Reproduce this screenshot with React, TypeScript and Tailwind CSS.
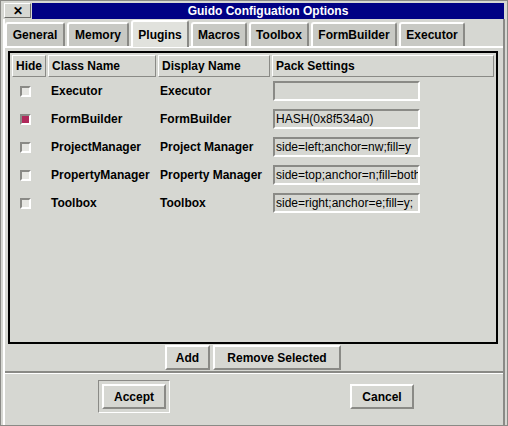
import React from 'react';

const font = { fontFamily: '"Liberation Sans", Arial, sans-serif' };

const tabs = ['General', 'Memory', 'Plugins', 'Macros', 'Toolbox', 'FormBuilder', 'Executor'];
const tabWidths: Record<string, string> = {
  General: 'w-[60px]',
  Memory: 'w-[62px]',
  Plugins: 'w-[58px]',
  Macros: 'w-[56px]',
  Toolbox: 'w-[60px]',
  FormBuilder: 'w-[86px]',
  Executor: 'w-[66px]',
};

const rows = [
  { cls: 'Executor', disp: 'Executor', pack: '', hide: false },
  { cls: 'FormBuilder', disp: 'FormBuilder', pack: 'HASH(0x8f534a0)', hide: true },
  { cls: 'ProjectManager', disp: 'Project Manager', pack: 'side=left;anchor=nw;fill=y', hide: false },
  { cls: 'PropertyManager', disp: 'Property Manager', pack: 'side=top;anchor=n;fill=both', hide: false },
  { cls: 'Toolbox', disp: 'Toolbox', pack: 'side=right;anchor=e;fill=y;', hide: false },
];

function HeaderCell({ label, className }: { label: string; className: string }) {
  return (
    <div
      className={`h-[22px] flex items-center pl-[3px] border border-t-white border-l-white border-b-[#8a8a86] border-r-[#8a8a86] font-bold text-[12px] ${className}`}
    >
      {label}
    </div>
  );
}

function Button({ label, className }: { label: string; className: string }) {
  return (
    <div
      className={`h-[25px] flex items-center justify-center font-bold text-[12px] border-2 border-t-white border-l-white border-b-[#8a8a86] border-r-[#8a8a86] ${className}`}
    >
      {label}
    </div>
  );
}

export default function App() {
  return (
    <div
      style={font}
      className="w-[508px] h-[426px] bg-[#d6d7d2] text-black flex flex-col overflow-hidden border border-[#8a8a86]"
    >
      {/* Title bar */}
      <div className="h-[18px] flex items-center bg-[#d6d7d2] px-[3px] pt-[1px]">
        <div className="w-[27px] h-[15px] flex items-center justify-center border border-t-white border-l-white border-b-[#6e6e6a] border-r-[#6e6e6a] text-[12px] font-bold leading-none">
          ✕
        </div>
        <div className="flex-1 h-[16px] bg-[#000084] text-white font-bold text-[12px] flex items-center justify-center ml-[1px]">
          Guido Configuation Options
        </div>
      </div>

      {/* Window body */}
      <div className="flex-1 flex flex-col mx-[2px] border-l-2 border-r-2 border-l-white border-r-[#8a8a86]">
        {/* Tabs */}
        <div className="h-[27px] flex items-end gap-[2px]">
          {tabs.map((t) => {
            const active = t === 'Plugins';
            return (
              <div
                key={t}
                className={`${tabWidths[t]} flex items-center justify-center font-bold text-[12px] rounded-t-[3px] border-2 border-b-0 border-t-white border-l-white border-r-[#8a8a86] ${
                  active ? 'h-[27px] bg-[#e1e2dd] -mb-[1px] relative z-10' : 'h-[24px] bg-[#c8c9c4]'
                }`}
              >
                {t}
              </div>
            );
          })}
        </div>

        {/* Tab panel */}
        <div className="h-[327px] flex flex-col border-t-2 border-t-white border-b-2 border-b-[#8a8a86] pl-[3px] pr-[5px] pt-[3px]">
          {/* Table frame */}
          <div className="h-[293px] border-2 border-black bg-[#d6d7d2] flex flex-col p-[2px]">
            <div className="flex gap-[2px]">
              <HeaderCell label="Hide" className="w-[34px]" />
              <HeaderCell label="Class Name" className="w-[108px]" />
              <HeaderCell label="Display Name" className="w-[112px]" />
              <HeaderCell label="Pack Settings" className="flex-1" />
            </div>
            {rows.map((r) => (
              <div key={r.cls} className="h-[28px] flex items-center font-bold text-[12px]">
                <div className="w-[36px] flex pl-[8px]">
                  <div
                    className={`w-[11px] h-[11px] border-2 border-t-[#8a8a86] border-l-[#8a8a86] border-b-white border-r-white ${
                      r.hide ? 'bg-[#b0285a]' : 'bg-[#e6e6e2]'
                    }`}
                  />
                </div>
                <div className="w-[109px] pl-[3px] whitespace-nowrap">{r.cls}</div>
                <div className="w-[114px] pl-[3px] whitespace-nowrap">{r.disp}</div>
                <div className="pl-[2px]">
                  <div className="w-[147px] h-[20px] border-2 border-t-[#8a8a86] border-l-[#8a8a86] border-b-white border-r-white flex items-center pl-[1px] overflow-hidden whitespace-nowrap font-normal text-[12px]">
                    {r.pack}
                  </div>
                </div>
              </div>
            ))}
          </div>

          {/* Add / Remove */}
          <div className="flex justify-center gap-[3px] mt-[1px]">
            <Button label="Add" className="w-[45px]" />
            <Button label="Remove Selected" className="w-[128px]" />
          </div>
        </div>

        {/* Dialog buttons */}
        <div className="flex-1 flex items-center border-t border-t-white pb-[6px]">
          <div className="ml-[93px] p-[3px] border border-t-[#8a8a86] border-l-[#8a8a86] border-b-white border-r-white">
            <Button label="Accept" className="w-[64px]" />
          </div>
          <div className="ml-[180px]">
            <Button label="Cancel" className="w-[64px]" />
          </div>
        </div>
      </div>
    </div>
  );
}
